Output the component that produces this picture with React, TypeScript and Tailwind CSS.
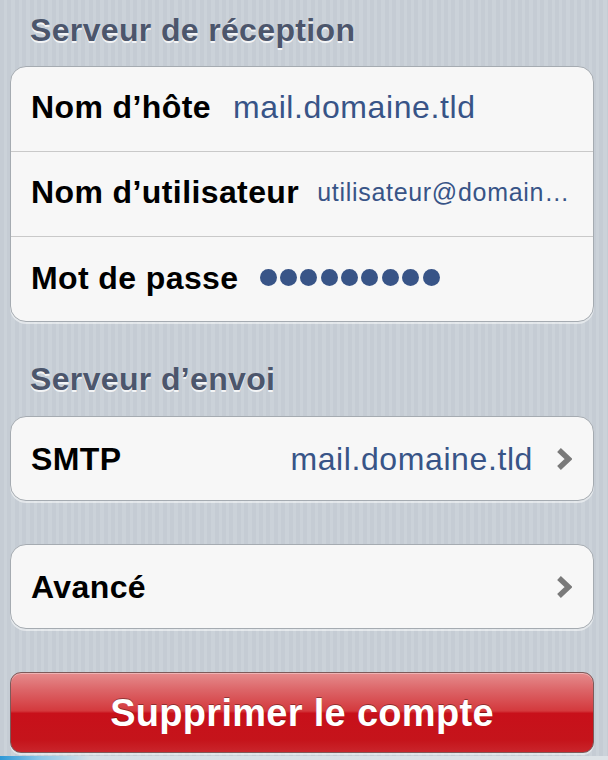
const font = { fontFamily: '"Liberation Sans", Arial, Helvetica, sans-serif' };

const Chevron = () => (
  <svg width="16" height="24" viewBox="0 0 16 24" className="shrink-0">
    <polyline
      points="3,3 12.5,12 3,21"
      fill="none"
      stroke="#7a7a7a"
      strokeWidth="5.4"
      strokeLinejoin="miter"
    />
  </svg>
);

const Header = ({ children, className = '' }: { children: React.ReactNode; className?: string }) => (
  <h2
    className={`pl-[20px] h-[32px] text-[32px] leading-[32px] font-bold tracking-[0.35px] text-[#4c566c] [text-shadow:0_2px_0_rgba(255,255,255,0.8)] ${className}`}
  >
    {children}
  </h2>
);

const Card = ({ children, className = '' }: { children: React.ReactNode; className?: string }) => (
  <div
    className={`rounded-[16px] border border-[#a5abb1] bg-[#f7f7f7] shadow-[0_2px_0_rgba(255,255,255,0.5)] overflow-hidden ${className}`}
  >
    {children}
  </div>
);

const Label = ({ children }: { children: React.ReactNode }) => (
  <span className="text-[32px] leading-[32px] font-bold tracking-[0.4px] text-black whitespace-nowrap">
    {children}
  </span>
);

const Value = ({ children, className = '' }: { children: React.ReactNode; className?: string }) => (
  <span className={`text-[32px] leading-[32px] tracking-[0.6px] text-[#385487] whitespace-nowrap ${className}`}>
    {children}
  </span>
);

export default function App() {
  return (
    <div
      className="h-[760px] w-[608px] overflow-hidden bg-[repeating-linear-gradient(90deg,#c5ccd4_0px,#c5ccd4_4px,#cbd2d9_4px,#cbd2d9_7.4px)]"
      style={font}
    >
      <div className="pt-[14px] pl-[10px] pr-[14px]">
        {/* Serveur de réception */}
        <Header>Serveur de réception</Header>
        <Card className="mt-[20px]">
          <div className="flex items-center gap-[22px] h-[84px] pl-[20px] pr-[21px] pb-[4px]">
            <Label>Nom d’hôte</Label>
            <Value>mail.domaine.tld</Value>
          </div>
          <div className="flex items-center gap-[18px] h-[85px] pl-[20px] pr-[21px] pb-[4px] border-t border-[#c9c9c9]">
            <Label>Nom d’utilisateur</Label>
            <span className="text-[25px] leading-[32px] tracking-[0.7px] text-[#385487] whitespace-nowrap">
              utilisateur@domain…
            </span>
          </div>
          <div className="flex items-center gap-[21px] h-[85px] pl-[20px] pr-[21px] pb-[3px] border-t border-[#c9c9c9]">
            <Label>Mot de passe</Label>
            <div className="flex gap-[3.4px]">
              {Array.from({ length: 9 }).map((_, i) => (
                <span key={i} className="w-[17px] h-[17px] rounded-full bg-[#385487]" />
              ))}
            </div>
          </div>
        </Card>

        {/* Serveur d'envoi */}
        <Header className="mt-[41px]">Serveur d’envoi</Header>
        <Card className="mt-[21px]">
          <div className="flex items-center h-[83px] pl-[20px] pr-[21px]">
            <Label>SMTP</Label>
            <Value className="ml-auto mr-[23px]">mail.domaine.tld</Value>
            <Chevron />
          </div>
        </Card>

        <Card className="mt-[43px]">
          <div className="flex items-center justify-between h-[83px] pl-[20px] pr-[21px]">
            <Label>Avancé</Label>
            <Chevron />
          </div>
        </Card>

        <button className="mt-[43px] w-full h-[81px] rounded-[11px] border border-[#7d5a5a] bg-[linear-gradient(180deg,#e68c8d_0%,#dc6467_22%,#d4393d_48%,#c8101a_51%,#c5141b_85%,#c9252b_100%)] shadow-[inset_0_1px_0_rgba(255,255,255,0.35),0_2px_0_rgba(255,255,255,0.45)] text-white text-[38px] leading-[38px] font-bold tracking-[0.3px] [text-shadow:0_-1px_0_rgba(0,0,0,0.35)]">
          Supprimer le compte
        </button>
      </div>
      <div className="mt-[3px] h-[4px] bg-[linear-gradient(90deg,#2f98d6_0px,#8cc6e6_40px,#d6dfe6_90px,#dde2e6_100%)]" />
    </div>
  );
}
